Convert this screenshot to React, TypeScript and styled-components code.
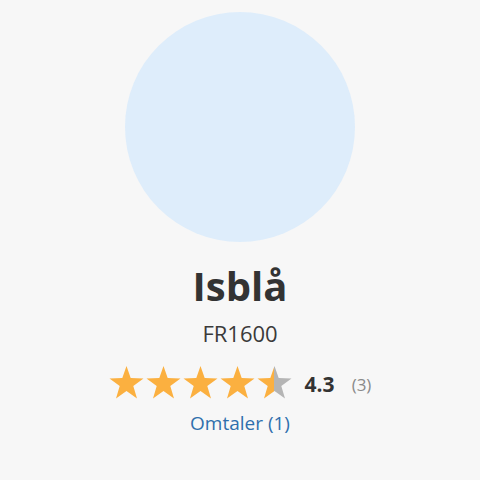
import { ReactElement, useId } from 'react';
import styled, { createGlobalStyle } from 'styled-components';

const GlobalStyle = createGlobalStyle`
    html,
    body {
        margin: 0;
        padding: 0;
        background: #f7f7f7;
        font-family: 'Open Sans', 'Liberation Sans', sans-serif;
        color: #333;
    }
`;

// star points, viewBox 0 0 34 33
const STAR_POINTS =
    '17,0 21.2,12.1 34,12.4 23.8,20.1 27.5,32.4 17,25.1 6.5,32.4 10.2,20.1 0,12.4 12.8,12.1';

type StarProps = {
    fill: number; // 0..1
};

const Star = ({ fill }: StarProps): ReactElement => {
    const id = useId();
    return (
        <StarSvg viewBox="0 0 34 33">
            <defs>
                <linearGradient id={id} x1="0" x2="1" y1="0" y2="0">
                    <stop offset={fill} stopColor="#fbb040" />
                    <stop offset={fill} stopColor="#b5b5b5" />
                </linearGradient>
            </defs>
            <polygon points={STAR_POINTS} fill={`url(#${id})`} />
        </StarSvg>
    );
};

const App = (): ReactElement => {
    const fills = [1, 1, 1, 1, 0.48];

    return (
        <>
            <GlobalStyle />
            <Page>
                <Swatch />
                <Title>Isblå</Title>
                <Code>FR1600</Code>
                <RatingRow>
                    <Stars>
                        {fills.map((f, i) => (
                            <Star key={i} fill={f} />
                        ))}
                    </Stars>
                    <Score>4.3</Score>
                    <Count>(3)</Count>
                </RatingRow>
                <ReviewLink href="#">Omtaler (1)</ReviewLink>
            </Page>
        </>
    );
};

const Page = styled.div`
    display: flex;
    flex-direction: column;
    align-items: center;
    padding-top: 12px;
`;

const Swatch = styled.div`
    width: 230px;
    height: 230px;
    border-radius: 50%;
    background: #deedfb;
`;

const Title = styled.h1`
    margin: 20px 0 0;
    font-size: 40px;
    line-height: 1.2;
    font-weight: 700;
    color: #333;
`;

const Code = styled.div`
    margin-top: 10px;
    font-size: 22px;
    line-height: 1.2;
    color: #3a3a3a;
`;

const RatingRow = styled.div`
    display: flex;
    align-items: center;
    margin-top: 20px;
`;

const Stars = styled.div`
    display: flex;
    gap: 2px;
`;

const StarSvg = styled.svg`
    width: 35px;
    height: 33px;
    display: block;
`;

const Score = styled.span`
    margin: 4px 0 0 13px;
    font-size: 21px;
    line-height: 1.2;
    font-weight: 700;
    color: #333;
`;

const Count = styled.span`
    margin: 4px 0 0 17px;
    font-size: 17px;
    line-height: 1.2;
    color: #8a8a8a;
`;

const ReviewLink = styled.a`
    margin-top: 13px;
    font-size: 19px;
    line-height: 1.2;
    color: #2f6fad;
    text-decoration: none;
`;

export default App;
